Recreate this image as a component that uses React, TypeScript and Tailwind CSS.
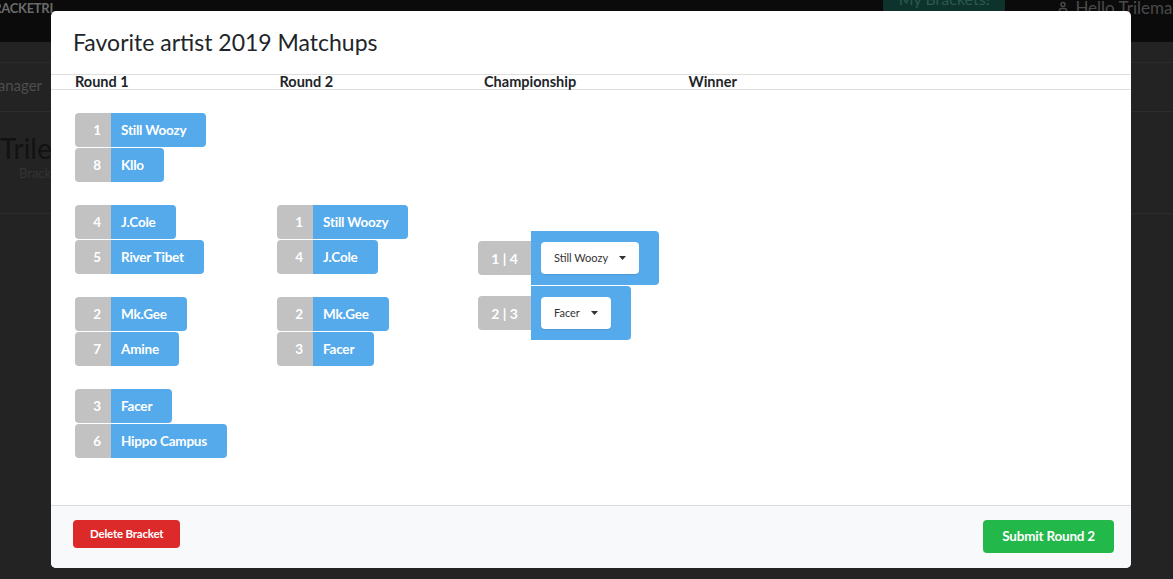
import { User } from "lucide-react";

interface Entry {
  seed: number;
  name: string;
}

const roundOne: Entry[][] = [
  [
    { seed: 1, name: "Still Woozy" },
    { seed: 8, name: "Kllo" },
  ],
  [
    { seed: 4, name: "J.Cole" },
    { seed: 5, name: "River Tibet" },
  ],
  [
    { seed: 2, name: "Mk.Gee" },
    { seed: 7, name: "Amine" },
  ],
  [
    { seed: 3, name: "Facer" },
    { seed: 6, name: "Hippo Campus" },
  ],
];

const roundTwo: Entry[][] = [
  [
    { seed: 1, name: "Still Woozy" },
    { seed: 4, name: "J.Cole" },
  ],
  [
    { seed: 2, name: "Mk.Gee" },
    { seed: 3, name: "Facer" },
  ],
];

const championship = [
  { seeds: "1 | 4", pick: "Still Woozy" },
  { seeds: "2 | 3", pick: "Facer" },
];

const headers = ["Round 1", "Round 2", "Championship", "Winner"];

function TeamRow({ entry }: { entry: Entry }) {
  return (
    <div className="flex h-[34px] items-stretch">
      <div className="flex w-[36px] items-center justify-end rounded-l-[4px] bg-[#c2c2c2] pr-[10px] text-[13.5px] font-bold text-white">
        {entry.seed}
      </div>
      <div className="flex items-center rounded-r-[4px] bg-[#55aaec] pl-[10px] pr-[20px] text-[13.5px] font-bold tracking-[-0.2px] text-white">
        {entry.name}
      </div>
    </div>
  );
}

function Matchup({ pair }: { pair: Entry[] }) {
  return (
    <div className="flex flex-col items-start gap-[1px]">
      {pair.map((entry) => (
        <TeamRow key={entry.seed} entry={entry} />
      ))}
    </div>
  );
}

function Backdrop() {
  return (
    <div className="min-h-[579px] bg-[#232323]">
      <div className="flex h-[42px] items-start bg-[#0b0b0b]">
        <span className="ml-[-15px] mt-[-1px] text-[13px] font-bold tracking-[-0.3px] text-[#6a6a6a]">BRACKETRI</span>
        <div className="ml-auto flex items-start">
          <div className="mt-[-10px] flex h-[22px] w-[122px] items-end justify-center rounded-[3px] bg-[#0e322c] pb-[1px] text-[16px] text-[#2a5a50]">
            My Brackets!
          </div>
          <div className="ml-[52px] mr-[-37px] flex items-start gap-[6px] text-[17px] text-[#4a4a4a]">
            <User className="mt-[1px] h-[12px] w-[12px]" strokeWidth={3} />
            <span className="mt-[-5px] whitespace-nowrap">Hello Trilemaester</span>
          </div>
        </div>
      </div>
      <div className="h-[20px]" />
      <div className="flex h-[50px] items-center border-y border-[#2c2c2c] pb-[4px]">
        <span className="ml-[-16px] text-[15px] text-[#4e4e4e]">Manager</span>
      </div>
      <div className="flex h-[102px] flex-col border-b border-[#2c2c2c] pt-[19px]">
        <div className="text-[28px] leading-[34px] text-[#121212]">Trilemaester</div>
        <div className="pl-[19px] text-[13px] leading-[16px] text-[#333333]">Brackets</div>
      </div>
    </div>
  );
}

export default function App() {
  return (
    <div className="relative h-[579px] w-[1173px] overflow-hidden font-['Lato',sans-serif]">
      <Backdrop />

      <div className="absolute left-[51px] top-[11px] flex h-[557px] w-[1080px] flex-col overflow-hidden rounded-[5px] bg-white">
        <div className="flex h-[63px] items-center px-[22px]">
          <h2 className="text-[23px] font-normal text-[#212529]">Favorite artist 2019 Matchups</h2>
        </div>

        <div className="flex h-[16px] items-center border-y border-[#dedede] pl-[24px]">
          {headers.map((header) => (
            <div key={header} className="w-[204.5px] pt-[1px] text-[14.5px] font-bold leading-none text-[#212529]">
              {header}
            </div>
          ))}
        </div>

        <div className="flex flex-1 items-start pl-[24px] pt-[23px]">
          <div className="flex h-[345px] w-[202px] flex-col justify-center gap-[23px]">
            {roundOne.map((pair) => (
              <Matchup key={pair[0].seed} pair={pair} />
            ))}
          </div>
          <div className="flex h-[345px] w-[201px] flex-col justify-center gap-[23px]">
            {roundTwo.map((pair) => (
              <Matchup key={pair[0].seed} pair={pair} />
            ))}
          </div>
          <div className="flex h-[345px] flex-col justify-center gap-[1px]">
            {championship.map((match) => (
              <div key={match.seeds} className="flex items-center">
                <div className="flex h-[34px] w-[53px] items-center justify-center rounded-l-[4px] bg-[#c2c2c2] text-[14px] font-bold text-white">
                  {match.seeds}
                </div>
                <div className="rounded-r-[4px] bg-[#55aaec] py-[11px] pl-[10px] pr-[20px]">
                  <button className="flex h-[32px] items-center gap-[11px] rounded-[4px] bg-white pl-[13px] pr-[13px] text-[11px] text-[#333333] shadow-[0_1px_1px_rgba(0,0,0,0.1)]">
                    {match.pick}
                    <svg width="7" height="4" viewBox="0 0 7 4" aria-hidden="true">
                      <path d="M0 0 L7 0 L3.5 4 Z" fill="#333333" />
                    </svg>
                  </button>
                </div>
              </div>
            ))}
          </div>
        </div>

        <div className="flex h-[63px] items-start justify-between border-t border-[#dcdcdc] bg-[#f8f9fa] pl-[22px] pr-[17px] pt-[14px]">
          <button className="h-[28px] rounded-[4px] bg-[#dc2a2a] px-[17px] text-[11.5px] font-bold tracking-[-0.2px] text-white">
            Delete Bracket
          </button>
          <button className="h-[33px] rounded-[4px] bg-[#22b84a] px-[19px] text-[13.5px] font-bold tracking-[-0.2px] text-white">
            Submit Round 2
          </button>
        </div>
      </div>
    </div>
  );
}
